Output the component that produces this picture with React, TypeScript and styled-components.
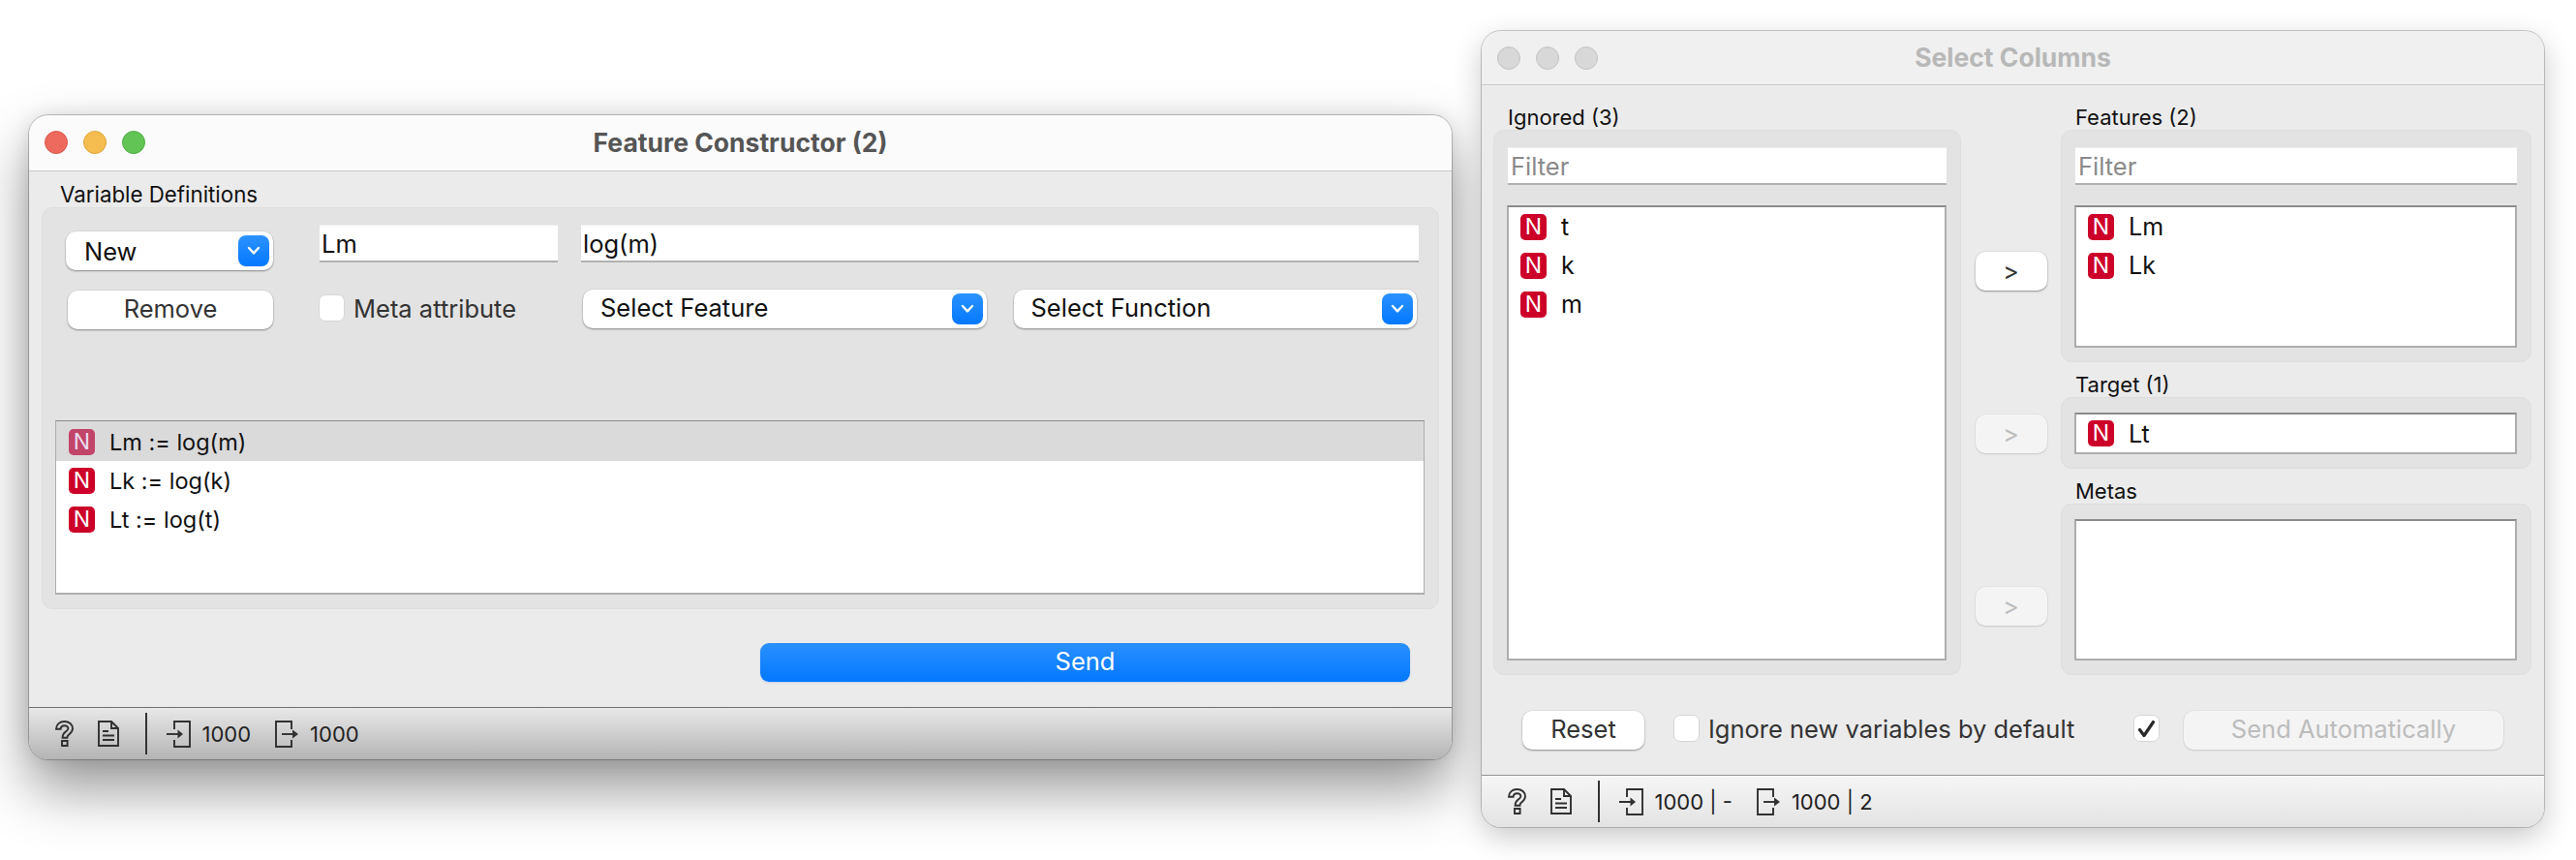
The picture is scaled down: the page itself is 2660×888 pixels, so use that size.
import React from 'react';
import styled, {createGlobalStyle} from 'styled-components';

const GlobalStyle = createGlobalStyle`
  html, body {
    margin: 0;
    height: 100%;
    overflow: hidden;
    background: #fff;
  }
  * {
    box-sizing: border-box;
  }
`;

const Stage = styled.div`
  display: flex;
  align-items: flex-start;
  width: 2660px;
  height: 888px;
  padding-left: 30px;
  font-family: Inter, "Liberation Sans", sans-serif;
  color: #111;
`;

const Window = styled.section<{$active?: boolean}>`
  display: flex;
  flex-direction: column;
  flex: none;
  width: ${p => (p.$active ? '1469px' : '1097px')};
  height: ${p => (p.$active ? '665px' : '822px')};
  margin-top: ${p => (p.$active ? '119px' : '32px')};
  margin-left: ${p => (p.$active ? '0' : '31px')};
  border-radius: 20px;
  overflow: hidden;
  background: #ebebeb;
  box-shadow: ${p =>
    p.$active
      ? '0 0 0 1px rgba(0,0,0,.22), 0 30px 60px rgba(0,0,0,.42), 0 0 20px rgba(0,0,0,.1)'
      : '0 0 0 1px rgba(0,0,0,.2), 0 10px 30px rgba(0,0,0,.22)'};
`;

const TitleBar = styled.header<{$active?: boolean}>`
  position: relative;
  display: flex;
  align-items: center;
  justify-content: center;
  flex: none;
  height: ${p => (p.$active ? '58px' : '56px')};
  padding-bottom: 2px;
  background: ${p => (p.$active ? '#fbfbfb' : '#f0f0f0')};
  border-bottom: 1px solid #c9c9c9;
  font-size: 26.5px;
  font-weight: 700;
  color: ${p => (p.$active ? '#555' : '#b8b8b8')};
`;

const Lights = styled.div`
  position: absolute;
  left: 16px;
  top: 16px;
  display: flex;
  gap: 16px;
`;

const Light = styled.span<{$color: string; $edge: string}>`
  width: 24px;
  height: 24px;
  border-radius: 50%;
  background: ${p => p.$color};
  border: 1px solid ${p => p.$edge};
`;

const Body = styled.div`
  display: flex;
  flex-direction: column;
  flex: 1;
  min-height: 0;
`;

const GroupLabel = styled.div<{$inset: number}>`
  height: 26px;
  padding-left: ${p => p.$inset}px;
  font-size: 22px;
  line-height: 26px;
`;

const Group = styled.div`
  display: flex;
  flex-direction: column;
  background: #e3e3e3;
  border: 1px solid #dedede;
  border-radius: 11px;
  padding: 0 14px 14px 13px;
`;

const DefinitionsLabel = styled(GroupLabel)`
  margin-top: 11px;
  font-size: 22.3px;
`;

const DefinitionsGroup = styled(Group)`
  margin: 0 13px;
  padding-top: 17px;
`;

const Controls = styled.div`
  display: grid;
  grid-template-columns: 214px 270px 1fr 1fr;
  grid-template-rows: 48px 41px;
  column-gap: 24px;
  row-gap: 19px;
  margin-left: 11px;
  margin-right: 6px;
  margin-bottom: 94px;
`;

const PushButton = styled.div<{$disabled?: boolean}>`
  display: flex;
  align-items: center;
  justify-content: center;
  height: 40px;
  padding-bottom: 4px;
  border-radius: 10px;
  font-size: 25.5px;
  color: ${p => (p.$disabled ? '#bcbcbc' : '#333')};
  background: ${p => (p.$disabled ? '#f4f4f4' : '#fff')};
  box-shadow: 0 1px 2px rgba(0, 0, 0, ${p => (p.$disabled ? '.12' : '.38')}), 0 0 0 .5px rgba(0, 0, 0, .06);
`;

const RemoveButton = styled(PushButton)`
  align-self: end;
  margin-left: 2px;
`;

const Combo = styled.div<{$lead?: boolean}>`
  display: flex;
  align-items: center;
  justify-content: space-between;
  height: 40px;
  margin: ${p => (p.$lead ? '0 0 1px' : '0 2px')};
  align-self: ${p => (p.$lead ? 'end' : 'start')};
  padding: 0 4px 0 ${p => (p.$lead ? '19px' : '18px')};
  border-radius: 10px;
  background: #fff;
  font-size: 25.5px;
  box-shadow: 0 1px 2px rgba(0, 0, 0, .38), 0 0 0 .5px rgba(0, 0, 0, .06);
`;

const ComboLabel = styled.span<{$lead?: boolean}>`
  margin-top: ${p => (p.$lead ? '0' : '-3px')};
`;

const ComboArrow = styled.span`
  display: flex;
  align-items: center;
  justify-content: center;
  width: 32px;
  height: 32px;
  border-radius: 8px;
  background: linear-gradient(#2c92ff, #0478ff);
`;

const TextInput = styled.input<{$wide?: boolean}>`
  grid-column: ${p => (p.$wide ? 'span 2' : 'auto')};
  width: 100%;
  height: 39px;
  padding: 0 2px;
  border: 0;
  border-top: 1px solid #efefef;
  border-bottom: 2px solid #b2b2b2;
  border-radius: 0;
  outline: none;
  background: #fff;
  font: 25.5px Inter, "Liberation Sans", sans-serif;
  color: #111;
  &::placeholder {
    color: #8a8a8a;
    opacity: 1;
  }
`;

const NameInput = styled(TextInput)`
  width: auto;
  margin-left: 24px;
`;

const CheckField = styled.label`
  display: flex;
  align-items: center;
  gap: 9px;
  margin-top: -4px;
  font-size: 25.5px;
  color: #333;
`;

const MetaField = styled(CheckField)`
  margin-left: 23px;
  margin-top: -3px;
  align-self: center;
`;

const Box = styled.span`
  display: flex;
  align-items: center;
  justify-content: center;
  width: 27px;
  height: 28px;
  border-radius: 7px;
  background: #fff;
  border: 1px solid #d6d6d6;
`;

const ListBox = styled.div<{$height: number}>`
  height: ${p => p.$height}px;
  background: #fff;
  border: 2px solid #adadad;
  border-top-color: #8b8b8b;
`;

const DefinitionsList = styled(ListBox)`
  border-width: 1px 1px 2px 1px;
`;

const Row = styled.div<{$selected?: boolean; $compact?: boolean}>`
  display: flex;
  align-items: center;
  gap: 15px;
  height: ${p => (p.$selected ? '41px' : '40px')};
  padding-top: ${p => (p.$selected ? '1px' : '0')};
  padding-left: ${p => (p.$compact ? '12px' : '13px')};
  font-size: ${p => (p.$compact ? '25px' : '23.5px')};
  background: ${p => (p.$selected ? '#dadada' : 'transparent')};
`;

const SingleRow = styled(Row)`
  height: 39px;
`;

const TypeBadge = styled.span<{$selected?: boolean}>`
  display: flex;
  align-items: center;
  justify-content: center;
  flex: none;
  width: 27px;
  height: 27px;
  border-radius: 5px;
  background: ${p => (p.$selected ? '#c24468' : '#cc0028')};
  color: ${p => (p.$selected ? '#eadcf0' : '#fff')};
  font-size: 23px;
  line-height: 27px;
`;

const SendRow = styled.div`
  display: flex;
  justify-content: flex-end;
  margin-top: 35px;
  padding-right: 43px;
`;

const SendButton = styled.div`
  display: flex;
  align-items: center;
  justify-content: center;
  width: 671px;
  height: 40px;
  padding-bottom: 3px;
  border-radius: 9px;
  background: linear-gradient(#2a90ff, #0478ff);
  color: #fff;
  font-size: 25.5px;
  box-shadow: 0 1px 2px rgba(0, 80, 200, .2);
`;

const StatusBar = styled.footer<{$active?: boolean}>`
  display: flex;
  align-items: center;
  flex: none;
  height: 54px;
  margin-top: auto;
  padding-left: 27px;
  border-top: 1px solid ${p => (p.$active ? '#707070' : '#939393')};
  background: ${p =>
    p.$active ? 'linear-gradient(#e8e8e8, #b4b4b4)' : 'linear-gradient(#f6f6f6, #e3e3e3)'};
  font-size: 22px;
  color: #222;
`;

const StatusIcon = styled.svg`
  flex: none;
  fill: none;
  stroke: #303030;
  stroke-width: 1.9;
`;

const HelpIcon = styled(StatusIcon)`
  margin-right: 25px;
`;

const StatusDivider = styled.span`
  width: 1.5px;
  height: 43px;
  margin: 0 20px 0 27px;
  background: #333;
`;

const SignalCount = styled.span`
  margin: 0 25px 0 12px;
  white-space: nowrap;
`;

const ColumnsGrid = styled.div`
  display: grid;
  grid-template-columns: 483px 74px 486px;
  column-gap: 14.5px;
  margin-top: 20px;
  padding: 0 12px;
`;

const Column = styled.div`
  display: flex;
  flex-direction: column;
`;

const ColumnGroup = styled(Group)<{$top: number}>`
  padding-top: ${p => p.$top}px;
  margin-bottom: 10px;
  &:last-child {
    margin-bottom: 0;
  }
`;

const FilterInput = styled(TextInput)`
  width: auto;
  margin: 0 0 21px 1px;
  padding: 0 3px;
`;

const TransferColumn = styled.div`
  display: grid;
  grid-template-rows: 40px 40px 40px;
  row-gap: 128px;
  padding-top: 152px;
`;

const TransferButton = styled(PushButton)<{$last?: boolean}>`
  margin-top: ${p => (p.$last ? '10px' : '0')};
  padding-bottom: 0;
  font-size: 25px;
`;

const OptionsRow = styled.div`
  display: flex;
  align-items: center;
  margin-top: 37px;
  padding: 0 42px;
`;

const ResetButton = styled(PushButton)`
  width: 126px;
  margin-right: 30px;
`;

const AutoCheck = styled(Box)`
  margin-left: auto;
  margin-right: 25px;
  margin-top: -4px;
`;

const AutoSendButton = styled(PushButton)`
  width: 330px;
`;

const Chevron = () => (
    <svg width="14" height="10" viewBox="0 0 14 10" fill="none" stroke="#fff" strokeWidth="2.4" strokeLinecap="round" strokeLinejoin="round">
        <path d="M2 2l5 5.4L12 2"/>
    </svg>
);

const QuestionGlyph = () => (
    <HelpIcon width="19" height="27" viewBox="0 0 19 27">
        <path d="M1 8.8C1 4 4.6 1 9.5 1 14.4 1 18 4 18 8.3c0 3.3-2 4.8-3.9 6.3-1.2 1-1.7 1.6-1.7 3.2H7.6c0-3 .8-4.4 2.9-6 1.8-1.4 2.9-2 2.9-3.5 0-1.9-1.5-3.1-3.8-3.1-2.4 0-3.9 1.5-4 3.6z"/>
        <path d="M7 21h5.6v5H7z"/>
    </HelpIcon>
);

const DocGlyph = () => (
    <StatusIcon width="22" height="27" viewBox="0 0 22 27">
        <path d="M1 1h13l7 7v18H1z"/>
        <path d="M14 1v7h7M5 11h6M5 15.5h12M5 20h12"/>
    </StatusIcon>
);

const InputGlyph = () => (
    <StatusIcon width="25" height="28" viewBox="0 0 25 28">
        <path d="M8 9V1h16v26H8v-7"/>
        <path d="M0 14h13"/>
        <path d="M11.5 9.5L17 14l-5.5 4.5z" fill="#303030" stroke="none"/>
    </StatusIcon>
);

const OutputGlyph = () => (
    <StatusIcon width="24" height="28" viewBox="0 0 24 28">
        <path d="M17 9V1H1v26h16v-7"/>
        <path d="M7 14h12"/>
        <path d="M18 9.5l6 4.5-6 4.5z" fill="#303030" stroke="none"/>
    </StatusIcon>
);

const TrafficLights = ({active}: {active?: boolean}) => (
    <Lights>
        <Light $color={active ? '#ee6a5f' : '#d8d8d8'} $edge={active ? '#d9574d' : '#c2c2c2'}/>
        <Light $color={active ? '#f5bd4f' : '#d8d8d8'} $edge={active ? '#dea33a' : '#c2c2c2'}/>
        <Light $color={active ? '#61c454' : '#d8d8d8'} $edge={active ? '#52ad46' : '#c2c2c2'}/>
    </Lights>
);

const Status = ({active, input, output}: {active?: boolean; input: string; output: string}) => (
    <StatusBar $active={active}>
        <QuestionGlyph/>
        <DocGlyph/>
        <StatusDivider/>
        <InputGlyph/>
        <SignalCount>{input}</SignalCount>
        <OutputGlyph/>
        <SignalCount>{output}</SignalCount>
    </StatusBar>
);

const definitions = ['Lm := log(m)', 'Lk := log(k)', 'Lt := log(t)'];

const FeatureConstructor = () => (
    <Window $active>
        <TitleBar $active>
            <TrafficLights active/>
            Feature Constructor (2)
        </TitleBar>
        <Body>
            <DefinitionsLabel $inset={32}>Variable Definitions</DefinitionsLabel>
            <DefinitionsGroup>
                <Controls>
                    <Combo $lead><ComboLabel $lead>New</ComboLabel><ComboArrow><Chevron/></ComboArrow></Combo>
                    <NameInput defaultValue="Lm" readOnly/>
                    <TextInput $wide defaultValue="log(m)" readOnly/>
                    <RemoveButton>Remove</RemoveButton>
                    <MetaField><Box/>Meta attribute</MetaField>
                    <Combo><ComboLabel>Select Feature</ComboLabel><ComboArrow><Chevron/></ComboArrow></Combo>
                    <Combo><ComboLabel>Select Function</ComboLabel><ComboArrow><Chevron/></ComboArrow></Combo>
                </Controls>
                <DefinitionsList $height={180}>
                    {definitions.map((item, index) => (
                        <Row key={item} $selected={index === 0}>
                            <TypeBadge $selected={index === 0}>N</TypeBadge>
                            {item}
                        </Row>
                    ))}
                </DefinitionsList>
            </DefinitionsGroup>
            <SendRow>
                <SendButton>Send</SendButton>
            </SendRow>
            <Status active input="1000" output="1000"/>
        </Body>
    </Window>
);

const SelectColumns = () => (
    <Window>
        <TitleBar>
            <TrafficLights/>
            Select Columns
        </TitleBar>
        <Body>
            <ColumnsGrid>
                <Column>
                    <GroupLabel $inset={15}>Ignored (3)</GroupLabel>
                    <ColumnGroup $top={17}>
                        <FilterInput placeholder="Filter" readOnly/>
                        <ListBox $height={470}>
                            {['t', 'k', 'm'].map(name => (
                                <Row key={name} $compact><TypeBadge>N</TypeBadge>{name}</Row>
                            ))}
                        </ListBox>
                    </ColumnGroup>
                </Column>
                <TransferColumn>
                    <TransferButton>&gt;</TransferButton>
                    <TransferButton $disabled>&gt;</TransferButton>
                    <TransferButton $disabled $last>&gt;</TransferButton>
                </TransferColumn>
                <Column>
                    <GroupLabel $inset={15}>Features (2)</GroupLabel>
                    <ColumnGroup $top={17}>
                        <FilterInput placeholder="Filter" readOnly/>
                        <ListBox $height={147}>
                            {['Lm', 'Lk'].map(name => (
                                <Row key={name} $compact><TypeBadge>N</TypeBadge>{name}</Row>
                            ))}
                        </ListBox>
                    </ColumnGroup>
                    <GroupLabel $inset={15}>Target (1)</GroupLabel>
                    <ColumnGroup $top={15}>
                        <ListBox $height={43}>
                            <SingleRow $compact><TypeBadge>N</TypeBadge>Lt</SingleRow>
                        </ListBox>
                    </ColumnGroup>
                    <GroupLabel $inset={15}>Metas</GroupLabel>
                    <ColumnGroup $top={15}>
                        <ListBox $height={146}/>
                    </ColumnGroup>
                </Column>
            </ColumnsGrid>
            <OptionsRow>
                <ResetButton>Reset</ResetButton>
                <CheckField><Box/>Ignore new variables by default</CheckField>
                <AutoCheck>
                    <svg width="19" height="19" viewBox="0 0 19 19" fill="none" stroke="#2a2a2a" strokeWidth="3.2" strokeLinecap="round" strokeLinejoin="round">
                        <path d="M2.5 10.5l4.5 6L16.5 2.5"/>
                    </svg>
                </AutoCheck>
                <AutoSendButton $disabled>Send Automatically</AutoSendButton>
            </OptionsRow>
            <Status input="1000 | -" output="1000 | 2"/>
        </Body>
    </Window>
);

const App = () => (
    <Stage>
        <GlobalStyle/>
        <FeatureConstructor/>
        <SelectColumns/>
    </Stage>
);

export default App;
